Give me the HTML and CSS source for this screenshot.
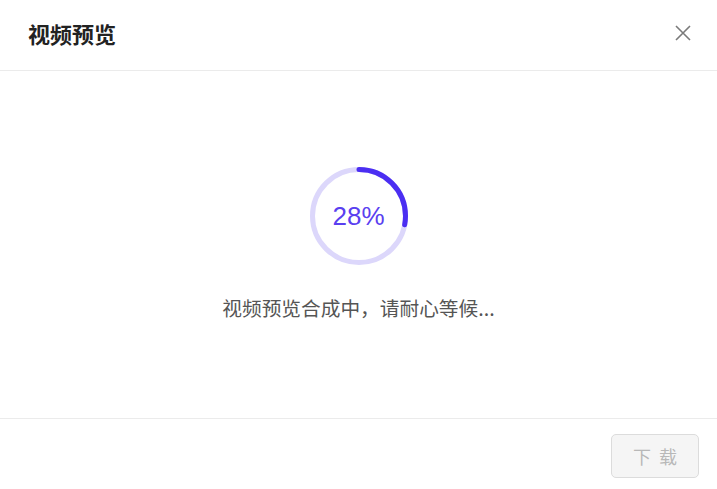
FILE: index.html
```html
<!DOCTYPE html>
<html lang="zh">
<head>
<meta charset="utf-8">
<link rel="stylesheet" href="styles.css">
</head>
<body>
<div class="modal">
  <header class="modal-header">
    <h1 class="modal-title">视频预览</h1>
    <button class="close-btn" aria-label="关闭">
      <svg width="16" height="16" viewBox="0 0 16 16"><path d="M1 1 L15 15 M15 1 L1 15" stroke="#7a7a7a" stroke-width="1.6" fill="none"/></svg>
    </button>
  </header>
  <main class="modal-body">
    <div class="progress">
      <svg class="ring" width="104" height="104" viewBox="0 0 104 104">
        <circle cx="52" cy="52" r="46.5" stroke="#dcd7fb" stroke-width="5" fill="none"/>
        <circle cx="52" cy="52" r="46.5" stroke="#4b2ef2" stroke-width="5" fill="none" stroke-linecap="round" stroke-dasharray="81.8 300" transform="rotate(-90 52 52)"/>
      </svg>
      <span class="percent">28%</span>
    </div>
    <p class="status">视频预览合成中，请耐心等候...</p>
  </main>
  <footer class="modal-footer">
    <button class="download-btn" disabled><span>下</span><span>载</span></button>
  </footer>
</div>
</body>
</html>
```
FILE: styles.css
```css
* { box-sizing: border-box; }
html, body { margin: 0; padding: 0; background: #fff; }
body { font-family: "Noto Sans CJK SC", "Noto Sans", sans-serif; }
.modal { width: 717px; height: 489px; display: flex; flex-direction: column; }
.modal-header {
  height: 71px;
  border-bottom: 1px solid #ebebeb;
  display: flex;
  align-items: center;
  justify-content: space-between;
  padding: 0 26px 0 28px;
}
.modal-title {
  margin: 0;
  font-size: 22px;
  font-weight: 700;
  color: #222;
  line-height: 30px;
  padding-bottom: 4px;
}
.close-btn {
  border: 0;
  background: none;
  padding: 0;
  width: 16px;
  height: 16px;
  display: flex;
  margin-bottom: 4px;
}
.modal-body {
  height: 348px;
  border-bottom: 1px solid #ebebeb;
  display: flex;
  flex-direction: column;
  align-items: center;
  padding-top: 93px;
}
.progress {
  position: relative;
  width: 104px;
  height: 104px;
  display: flex;
  align-items: center;
  justify-content: center;
}
.ring { position: absolute; left: 0; top: 0; }
.percent {
  position: relative;
  font-family: "Liberation Sans", Arial, sans-serif;
  font-size: 26px;
  color: #5a3ff0;
  line-height: 1;
}
.status {
  margin: 26px 0 0;
  font-size: 19.7px;
  line-height: 28px;
  color: #555;
}
.modal-footer {
  flex: 1;
  display: flex;
  justify-content: flex-end;
  align-items: flex-start;
  padding: 15px 18px 0 0;
}
.download-btn {
  width: 88px;
  height: 44px;
  border: 1px solid #dcdcdc;
  border-radius: 5px;
  background: #f5f5f5;
  color: #b8b8b8;
  font-family: "Noto Sans CJK SC", sans-serif;
  font-size: 18px;
  padding: 0;
  display: flex;
  align-items: center;
  justify-content: center;
  gap: 8px;
}
```
